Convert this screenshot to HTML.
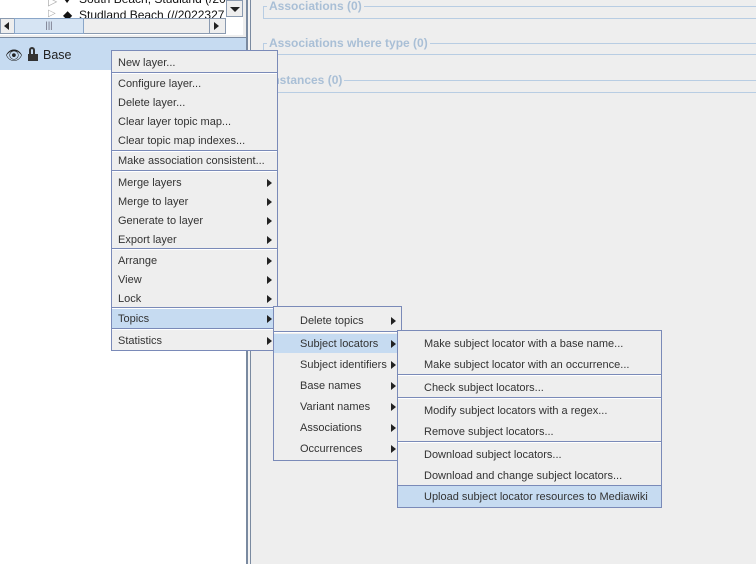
<!DOCTYPE html>
<html><head><style>
body{margin:0;width:756px;height:564px;overflow:hidden;position:relative;background:#eeeeee;font-family:"Liberation Sans",sans-serif;font-size:11px;color:#333}
.a{position:absolute}
.menu{position:absolute;background:#eeeeee;border:1px solid #7a8ab8;box-sizing:border-box}
.it{position:absolute;left:0;right:0;height:19px;line-height:21px;white-space:nowrap}
.hl{background:#c6dbf1}
.sep{position:absolute;left:0;right:0;height:1px;background:#7a8ab8;border-bottom:1px solid #fff}
.arr{position:absolute;width:0;height:0;border-left:5px solid #222;border-top:4px solid transparent;border-bottom:4px solid transparent;top:6px}
.tb{position:absolute;left:263px;width:600px;border:1px solid #b8cde3;border-right:none}
.tt{position:absolute;background:#eeeeee;color:#a9bfd6;font-weight:bold;font-size:12px;padding:0 2px;line-height:14px}
</style></head><body>
<div class="a" style="left:0;top:0;width:246px;height:564px;background:#fff"></div>
<div class="a" style="left:246px;top:0;width:2px;height:564px;background:#7a8aa0"></div>
<div class="a" style="left:248px;top:0;width:2px;height:564px;background:#f4f4f4"></div>
<div class="a" style="left:250px;top:0;width:1px;height:564px;background:#7a8aa0"></div>
<div class="a" style="left:0;top:0;width:243px;height:35px;background:#fff;overflow:hidden;font-size:12px;color:#111">
 <div class="a" style="left:48px;top:-6px;color:#aaa">▷</div><div class="a" style="left:64px;top:-8px">♦</div><div class="a" style="left:79px;top:-8px">South Beach, Studland (/20</div>
 <div class="a" style="left:48px;top:8px;color:#aaa;font-size:10px">▷</div><div class="a" style="left:63px;top:8px">◆</div><div class="a" style="left:79px;top:8px">Studland Beach (//2022327</div>
</div>
<div class="a" style="left:226px;top:0;width:17px;height:17px;background:#eee;border:1px solid #8a9ab0;box-sizing:border-box"><div class="a" style="left:3px;top:6px;border-top:5px solid #222;border-left:5px solid transparent;border-right:5px solid transparent"></div></div>
<div class="a" style="left:0;top:18px;width:226px;height:16px;background:#eee;border:1px solid #8a9ab0;box-sizing:border-box"></div>
<div class="a" style="left:4px;top:22px;border-right:5px solid #222;border-top:4px solid transparent;border-bottom:4px solid transparent"></div>
<div class="a" style="left:14px;top:18px;width:70px;height:16px;background:#d6e4f3;border:1px solid #8aa6c8;box-sizing:border-box;text-align:center;line-height:12px;font-size:9px;color:#667">|||</div>
<div class="a" style="left:209px;top:18px;width:1px;height:16px;background:#8a9ab0"></div>
<div class="a" style="left:214px;top:22px;border-left:5px solid #222;border-top:4px solid transparent;border-bottom:4px solid transparent"></div>
<div class="a" style="left:243px;top:0;width:3px;height:37px;background:#eee"></div>
<div class="a" style="left:0;top:35px;width:246px;height:2px;background:#eee"></div>
<div class="a" style="left:0;top:37px;width:246px;height:1px;background:#7a8aa0"></div>
<div class="a" style="left:0;top:38px;width:246px;height:32px;background:#c6dbf1"></div>
<div class="a" style="left:5px;top:47px;font-size:14px;color:#222">👁</div>
<div class="a" style="left:28px;top:54px;width:10px;height:7px;background:#333"></div>
<div class="a" style="left:29px;top:47px;width:6px;height:7px;border:2px solid #333;border-bottom:none;border-radius:4px 4px 0 0;box-sizing:border-box"></div>
<div class="a" style="left:43px;top:48px;font-size:12.5px;color:#222">Base</div>
<div class="tb" style="top:6px;height:11px"></div><div class="tt" style="left:267px;top:-1px">Associations (0)</div>
<div class="tb" style="top:43px;height:10px"></div><div class="tt" style="left:267px;top:36px">Associations where type (0)</div>
<div class="tb" style="top:80px;height:11px"></div><div class="tt" style="left:267px;top:73px">Instances (0)</div>
<div class="menu" style="left:111px;top:50px;width:167px;height:301px">
 <div class="it" style="top:2px;padding-left:6px">New layer...</div>
 <div class="sep" style="top:21px"></div>
 <div class="it" style="top:23px;padding-left:6px">Configure layer...</div>
 <div class="it" style="top:42px;padding-left:6px">Delete layer...</div>
 <div class="it" style="top:61px;padding-left:6px">Clear layer topic map...</div>
 <div class="it" style="top:80px;padding-left:6px">Clear topic map indexes...</div>
 <div class="sep" style="top:99px"></div>
 <div class="it" style="top:100px;padding-left:6px">Make association consistent...</div>
 <div class="sep" style="top:119px"></div>
 <div class="it" style="top:122px;padding-left:6px">Merge layers<div class="arr" style="left:155px"></div></div>
 <div class="it" style="top:141px;padding-left:6px">Merge to layer<div class="arr" style="left:155px"></div></div>
 <div class="it" style="top:160px;padding-left:6px">Generate to layer<div class="arr" style="left:155px"></div></div>
 <div class="it" style="top:179px;padding-left:6px">Export layer<div class="arr" style="left:155px"></div></div>
 <div class="sep" style="top:197px"></div>
 <div class="it" style="top:200px;padding-left:6px">Arrange<div class="arr" style="left:155px"></div></div>
 <div class="it" style="top:219px;padding-left:6px">View<div class="arr" style="left:155px"></div></div>
 <div class="it" style="top:238px;padding-left:6px">Lock<div class="arr" style="left:155px"></div></div>
 <div class="sep" style="top:256px"></div>
 <div class="it hl" style="top:258px;padding-left:6px">Topics<div class="arr" style="left:155px"></div></div>
 <div class="sep" style="top:277px"></div>
 <div class="it" style="top:280px;padding-left:6px">Statistics<div class="arr" style="left:155px"></div></div>
</div>
<div class="menu" style="left:273px;top:306px;width:129px;height:155px">
 <div class="it" style="top:4px;padding-left:26px">Delete topics<div class="arr" style="left:117px"></div></div>
 <div class="sep" style="top:24px"></div>
 <div class="it hl" style="top:27px;padding-left:26px">Subject locators<div class="arr" style="left:117px"></div></div>
 <div class="it" style="top:48px;padding-left:26px">Subject identifiers<div class="arr" style="left:117px"></div></div>
 <div class="it" style="top:69px;padding-left:26px">Base names<div class="arr" style="left:117px"></div></div>
 <div class="it" style="top:90px;padding-left:26px">Variant names<div class="arr" style="left:117px"></div></div>
 <div class="it" style="top:111px;padding-left:26px">Associations<div class="arr" style="left:117px"></div></div>
 <div class="it" style="top:132px;padding-left:26px">Occurrences<div class="arr" style="left:117px"></div></div>
</div>
<div class="menu" style="left:397px;top:330px;width:265px;height:178px">
 <div class="it" style="top:3px;padding-left:26px">Make subject locator with a base name...</div>
 <div class="it" style="top:24px;padding-left:26px">Make subject locator with an occurrence...</div>
 <div class="sep" style="top:43px"></div>
 <div class="it" style="top:47px;padding-left:26px">Check subject locators...</div>
 <div class="sep" style="top:66px"></div>
 <div class="it" style="top:70px;padding-left:26px">Modify subject locators with a regex...</div>
 <div class="it" style="top:91px;padding-left:26px">Remove subject locators...</div>
 <div class="sep" style="top:110px"></div>
 <div class="it" style="top:114px;padding-left:26px">Download subject locators...</div>
 <div class="it" style="top:135px;padding-left:26px">Download and change subject locators...</div>
 <div class="sep" style="top:154px;background:#7a8ab8;border:none"></div>
 <div class="it hl" style="top:155px;height:21px;line-height:22px;padding-left:26px">Upload subject locator resources to Mediawiki</div>
</div>
</body></html>
